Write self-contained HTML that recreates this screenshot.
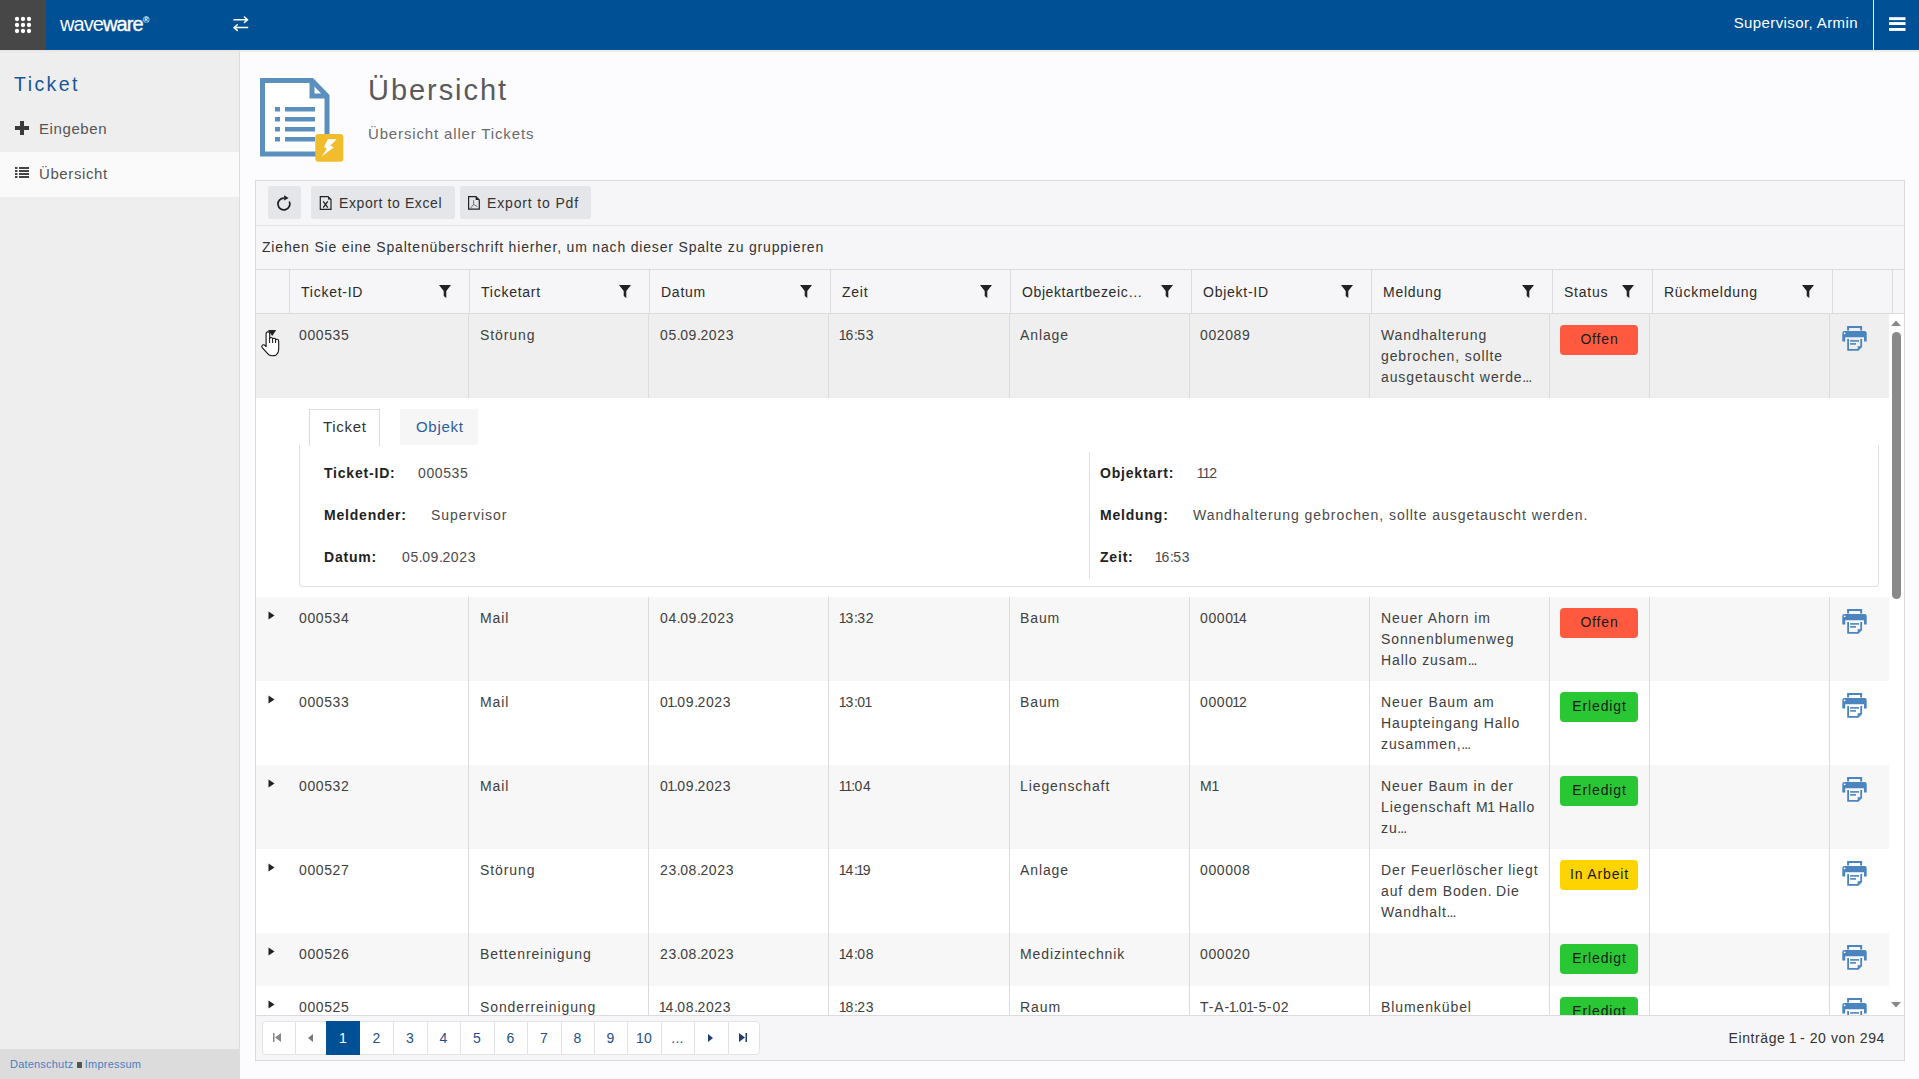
<!DOCTYPE html><html><head><meta charset="utf-8"><style>
*{box-sizing:border-box;margin:0;padding:0}
html,body{width:1919px;height:1079px;overflow:hidden;background:#fcfcfe;font-family:"Liberation Sans", sans-serif;color:#333}
.a{position:absolute}
.t{position:absolute;white-space:nowrap;font-size:14px;letter-spacing:0.8px;line-height:16px}
#top{left:0;top:0;width:1919px;height:50px;background:#005096}
#apps{left:0;top:0;width:46px;height:50px;background:#474747}
#side{left:0;top:50px;width:240px;height:1029px;background:#eeeeee;border-right:1px solid #dddddd}
.grid{left:255px;top:180px;width:1650px;height:881px;border:1px solid #dadadd;background:#f6f6f8}
.btn{position:absolute;top:186px;height:33px;background:#e4e6ea;border-radius:3px}
.hc{position:absolute;top:270px;height:43px;border-left:1px solid #dcdcdc}
.row{position:absolute;left:256px;width:1633px}
.bc{position:absolute;top:0;bottom:0;border-left:1px solid #dcdcdc}
.badge{position:absolute;width:78px;height:30px;border-radius:4px;font-size:14px;letter-spacing:0.85px;line-height:28px;text-align:center;color:#1a1a1a;text-indent:1px}
.pg{position:absolute;top:1021px;height:34px;width:34px;text-align:center;line-height:34px;font-size:14px;color:#1f4f8f;border-left:1px solid #e3e3e3}
</style></head><body>
<div id="top" class="a"></div>
<div id="apps" class="a"></div>
<svg class="a" style="left:0;top:0" width="46" height="50"><circle cx="17" cy="19" r="2.15" fill="#fff"/><circle cx="17" cy="25" r="2.15" fill="#fff"/><circle cx="17" cy="31" r="2.15" fill="#fff"/><circle cx="23" cy="19" r="2.15" fill="#fff"/><circle cx="23" cy="25" r="2.15" fill="#fff"/><circle cx="23" cy="31" r="2.15" fill="#fff"/><circle cx="29" cy="19" r="2.15" fill="#fff"/><circle cx="29" cy="25" r="2.15" fill="#fff"/><circle cx="29" cy="31" r="2.15" fill="#fff"/></svg>
<div class="t" style="left:60px;top:12px;font-size:20px;line-height:24px;color:#fff;letter-spacing:-0.95px">wave<span style="-webkit-text-stroke:0.35px #fff;letter-spacing:-0.9px">ware</span><span style="font-size:9px;position:relative;top:-8px;left:0px;font-weight:bold">®</span></div>
<svg class="a" style="left:232px;top:16px" width="18" height="17" viewBox="0 0 18 17"><g stroke="#fff" stroke-width="1.5" fill="none" stroke-linecap="round" stroke-linejoin="round"><path d="M2 3.7H15.6M12.4 1L15.6 3.7L12.4 6.5"/><path d="M15.6 11.6H2M5.3 8.8L2 11.6L5.3 14.4"/></g></svg>
<div class="t" style="right:61px;top:14px;font-size:15px;line-height:18px;color:#fff;letter-spacing:0.4px">Supervisor, Armin</div>
<div class="a" style="left:1873px;top:0;width:1px;height:50px;background:#e8eef6"></div>
<svg class="a" style="left:1889px;top:16px" width="17" height="16"><rect x="0" y="1.2" width="16.5" height="2.9" fill="#fff"/><rect x="0" y="6.1" width="16.5" height="2.9" fill="#fff"/><rect x="0" y="12" width="16.5" height="2.9" fill="#fff"/></svg>
<div id="side" class="a"></div>
<div class="a" style="left:0;top:50px;width:1919px;height:3px;background:linear-gradient(#e4e4e4,rgba(0,0,0,0))"></div>
<div class="t" style="left:14px;top:73px;font-size:19.5px;line-height:22px;color:#17579b;letter-spacing:2.45px">Ticket</div>
<svg class="a" style="left:15px;top:121px" width="14" height="14"><path d="M5 0H9V5H14V9H9V14H5V9H0V5H5Z" fill="#3a3a3a"/></svg>
<div class="t" style="left:39px;top:120px;font-size:15px;line-height:18px;color:#555;letter-spacing:0.6px">Eingeben</div>
<div class="a" style="left:0;top:152px;width:239px;height:45px;background:#fafafa"></div>
<svg class="a" style="left:15px;top:166px" width="14" height="13"><rect x="0" y="1" width="2.5" height="2" fill="#444"/><rect x="4" y="1" width="10" height="2" fill="#444"/><rect x="0" y="4" width="2.5" height="2" fill="#444"/><rect x="4" y="4" width="10" height="2" fill="#444"/><rect x="0" y="7" width="2.5" height="2" fill="#444"/><rect x="4" y="7" width="10" height="2" fill="#444"/><rect x="0" y="10" width="2.5" height="2" fill="#444"/><rect x="4" y="10" width="10" height="2" fill="#444"/></svg>
<div class="t" style="left:39px;top:165px;font-size:15px;line-height:18px;color:#555;letter-spacing:0.6px">Übersicht</div>
<div class="a" style="left:0;top:1049px;width:239px;height:30px;background:#dcdcdc"></div>
<div class="t" style="left:10px;top:1058px;font-size:11px;line-height:13px;color:#4a7fbf;letter-spacing:0.2px">Datenschutz <span style="display:inline-block;width:5px;height:6px;background:#555;vertical-align:0px"></span> Impressum</div>
<svg class="a" style="left:258px;top:76px" width="90" height="90" viewBox="0 0 90 90">
<path d="M4.5 4.5H54L69 20V78H4.5Z" fill="#fff" stroke="#5b8fbe" stroke-width="5"/>
<path d="M54 4.5V20H69" fill="none" stroke="#5b8fbe" stroke-width="5"/>
<g fill="#5b8fbe"><rect x="17" y="31" width="5" height="4.5"/><rect x="27" y="31" width="30" height="4.5"/>
<rect x="17" y="41" width="5" height="4.5"/><rect x="27" y="41" width="30" height="4.5"/>
<rect x="17" y="51" width="5" height="4.5"/><rect x="27" y="51" width="30" height="4.5"/>
<rect x="17" y="61" width="5" height="4.5"/><rect x="27" y="61" width="30" height="4.5"/></g>
<rect x="57.3" y="58" width="28" height="27.7" rx="3" fill="#f1bd2c"/>
<path d="M70 63L78.7 63.2L72.2 69.8L76 71.3L63.7 80.4L68.8 72.7L66 70.7Z" fill="#fff"/>
</svg>
<div class="t" style="left:368px;top:74px;font-size:29px;line-height:33px;color:#5a5a5a;letter-spacing:1.95px">Übersicht</div>
<div class="t" style="left:368px;top:125px;font-size:15px;line-height:18px;color:#6a6a6a;letter-spacing:0.85px">Übersicht aller Tickets</div>
<div class="a grid"></div>
<div class="a" style="left:256px;top:225px;width:1648px;height:1px;background:#e3e3e6"></div>
<div class="a" style="left:256px;top:269px;width:1648px;height:1px;background:#dcdcdf"></div>
<div class="btn" style="left:268px;width:33px"></div>
<svg class="a" style="left:276px;top:194px" width="17" height="17" viewBox="0 0 17 17"><path d="M7.9 4.1A5.9 5.9 0 1 0 13.25 7.5" fill="none" stroke="#1e1e1e" stroke-width="1.7"/><path d="M8.1 1.2L12.6 3.9L8.1 6.6Z" fill="#1e1e1e"/></svg>
<div class="btn" style="left:311px;width:144px"></div>
<svg class="a" style="left:319px;top:195px" width="14" height="16" viewBox="0 0 14 16"><path d="M1.3 1.6H9L12 4.6V14.4H1.3Z" fill="none" stroke="#222" stroke-width="1.2"/><path d="M9 1.6V4.6H12Z" fill="#222"/><path d="M4.2 6.3L8.8 12.6M8.8 6.3L4.2 12.6" stroke="#222" stroke-width="1.3"/></svg>
<div class="t" style="left:339px;top:195px;font-size:14px;letter-spacing:0.6px;color:#333">Export to Excel</div>
<div class="btn" style="left:460px;width:131px"></div>
<svg class="a" style="left:467px;top:195px" width="14" height="16" viewBox="0 0 14 16"><path d="M1.6 1.7H9L12.3 5V14.2H1.6Z" fill="none" stroke="#222" stroke-width="1.2"/><path d="M8.6 1.7V5H12.3Z" fill="#222"/><path d="M6.6 5.2V9.5L3.4 13.3M6.6 9.5L10.4 11.6" fill="none" stroke="#555" stroke-width="0.8"/></svg>
<div class="t" style="left:487px;top:195px;font-size:14px;letter-spacing:0.85px;color:#333">Export to Pdf</div>
<div class="t" style="left:262px;top:239px;font-size:14px;letter-spacing:0.82px;color:#333">Ziehen Sie eine Spaltenüberschrift hierher, um nach dieser Spalte zu gruppieren</div>
<div class="a" style="left:256px;top:313px;width:1648px;height:1px;background:#dcdcdf"></div>
<div class="a" style="left:289px;top:270px;width:1px;height:43px;background:#dcdcdf"></div>
<div class="t" style="left:301px;top:284px;color:#2b2b2b;letter-spacing:0.75px">Ticket-ID</div>
<div class="a" style="left:439px;top:284px;width:12px;height:13px"><svg width="12" height="13" viewBox="0 0 12 13"><path d="M0 0H12L7.3 6V13L4.7 11V6Z" fill="#222"/></svg></div>
<div class="a" style="left:469px;top:270px;width:1px;height:43px;background:#dcdcdf"></div>
<div class="t" style="left:481px;top:284px;color:#2b2b2b;letter-spacing:0.75px">Ticketart</div>
<div class="a" style="left:619px;top:284px;width:12px;height:13px"><svg width="12" height="13" viewBox="0 0 12 13"><path d="M0 0H12L7.3 6V13L4.7 11V6Z" fill="#222"/></svg></div>
<div class="a" style="left:649px;top:270px;width:1px;height:43px;background:#dcdcdf"></div>
<div class="t" style="left:661px;top:284px;color:#2b2b2b;letter-spacing:0.75px">Datum</div>
<div class="a" style="left:800px;top:284px;width:12px;height:13px"><svg width="12" height="13" viewBox="0 0 12 13"><path d="M0 0H12L7.3 6V13L4.7 11V6Z" fill="#222"/></svg></div>
<div class="a" style="left:830px;top:270px;width:1px;height:43px;background:#dcdcdf"></div>
<div class="t" style="left:842px;top:284px;color:#2b2b2b;letter-spacing:0.75px">Zeit</div>
<div class="a" style="left:980px;top:284px;width:12px;height:13px"><svg width="12" height="13" viewBox="0 0 12 13"><path d="M0 0H12L7.3 6V13L4.7 11V6Z" fill="#222"/></svg></div>
<div class="a" style="left:1010px;top:270px;width:1px;height:43px;background:#dcdcdf"></div>
<div class="t" style="left:1022px;top:284px;color:#2b2b2b;letter-spacing:0.6px">Objektartbezeic…</div>
<div class="a" style="left:1161px;top:284px;width:12px;height:13px"><svg width="12" height="13" viewBox="0 0 12 13"><path d="M0 0H12L7.3 6V13L4.7 11V6Z" fill="#222"/></svg></div>
<div class="a" style="left:1191px;top:270px;width:1px;height:43px;background:#dcdcdf"></div>
<div class="t" style="left:1203px;top:284px;color:#2b2b2b;letter-spacing:0.75px">Objekt-ID</div>
<div class="a" style="left:1341px;top:284px;width:12px;height:13px"><svg width="12" height="13" viewBox="0 0 12 13"><path d="M0 0H12L7.3 6V13L4.7 11V6Z" fill="#222"/></svg></div>
<div class="a" style="left:1371px;top:270px;width:1px;height:43px;background:#dcdcdf"></div>
<div class="t" style="left:1383px;top:284px;color:#2b2b2b;letter-spacing:0.75px">Meldung</div>
<div class="a" style="left:1522px;top:284px;width:12px;height:13px"><svg width="12" height="13" viewBox="0 0 12 13"><path d="M0 0H12L7.3 6V13L4.7 11V6Z" fill="#222"/></svg></div>
<div class="a" style="left:1552px;top:270px;width:1px;height:43px;background:#dcdcdf"></div>
<div class="t" style="left:1564px;top:284px;color:#2b2b2b;letter-spacing:0.75px">Status</div>
<div class="a" style="left:1622px;top:284px;width:12px;height:13px"><svg width="12" height="13" viewBox="0 0 12 13"><path d="M0 0H12L7.3 6V13L4.7 11V6Z" fill="#222"/></svg></div>
<div class="a" style="left:1652px;top:270px;width:1px;height:43px;background:#dcdcdf"></div>
<div class="t" style="left:1664px;top:284px;color:#2b2b2b;letter-spacing:0.75px">Rückmeldung</div>
<div class="a" style="left:1802px;top:284px;width:12px;height:13px"><svg width="12" height="13" viewBox="0 0 12 13"><path d="M0 0H12L7.3 6V13L4.7 11V6Z" fill="#222"/></svg></div>
<div class="a" style="left:1832px;top:270px;width:1px;height:43px;background:#dcdcdf"></div>
<div class="a" style="left:1892px;top:270px;width:1px;height:43px;background:#dcdcdf"></div>
<div class="a" style="left:256px;top:314px;width:1648px;height:701px;background:#fff;overflow:hidden">
<div class="a" style="left:0;top:0px;width:1633px;height:84px;background:#efefef"><div class="a" style="left:212px;top:0;width:1px;height:84px;background:#dcdcdc"></div><div class="a" style="left:392px;top:0;width:1px;height:84px;background:#dcdcdc"></div><div class="a" style="left:572px;top:0;width:1px;height:84px;background:#dcdcdc"></div><div class="a" style="left:753px;top:0;width:1px;height:84px;background:#dcdcdc"></div><div class="a" style="left:933px;top:0;width:1px;height:84px;background:#dcdcdc"></div><div class="a" style="left:1113px;top:0;width:1px;height:84px;background:#dcdcdc"></div><div class="a" style="left:1293px;top:0;width:1px;height:84px;background:#dcdcdc"></div><div class="a" style="left:1393px;top:0;width:1px;height:84px;background:#dcdcdc"></div><div class="a" style="left:1573px;top:0;width:1px;height:84px;background:#dcdcdc"></div><div class="t" style="left:43px;top:13px;color:#404040;letter-spacing:0.9px"><span style="letter-spacing:0.6px">000535</span></div><div class="t" style="left:224px;top:13px;color:#404040;letter-spacing:0.9px">Störung</div><div class="t" style="left:404px;top:13px;color:#404040;letter-spacing:0.9px"><span style="letter-spacing:0.6px">05</span><span style="letter-spacing:-0.45px">.</span><span style="letter-spacing:0.6px">09</span><span style="letter-spacing:-0.45px">.</span><span style="letter-spacing:0.6px">2023</span></div><div class="t" style="left:584px;top:13px;color:#404040;letter-spacing:0.9px"><span style="margin-left:-1.2px;letter-spacing:-1.1px">1</span><span style="letter-spacing:0.6px">6</span><span style="letter-spacing:-0.45px">:</span><span style="letter-spacing:0.6px">53</span></div><div class="t" style="left:764px;top:13px;color:#404040;letter-spacing:0.9px">Anlage</div><div class="t" style="left:944px;top:13px;color:#404040;letter-spacing:0.9px"><span style="letter-spacing:0.6px">002089</span></div><div class="t" style="left:1125px;top:13px;color:#404040;letter-spacing:0.9px">Wandhalterung</div><div class="t" style="left:1125px;top:34px;color:#404040;letter-spacing:0.9px">gebrochen, sollte</div><div class="t" style="left:1125px;top:55px;color:#404040;letter-spacing:0.9px">ausgetauscht werde<span style="letter-spacing:-0.9px;margin-left:-0.3px">...</span></div><div class="badge" style="left:1304px;top:11px;background:#ff5a40">Offen</div><svg class="a" style="left:1586px;top:12px" width="26" height="26" viewBox="0 0 26 26"><path d="M6.1 4.6V1.1H19.1V4.6" fill="none" stroke="#4b85c0" stroke-width="2"/><path d="M0.3 7Q0.3 4.9 2.4 4.9H22.6Q24.7 4.9 24.7 7V15.6H22V11.2H3.2V15.6H0.3Z" fill="#4b85c0"/><circle cx="2.6" cy="7.3" r="0.9" fill="#fff"/><path d="M6.1 13V23.85H16L19.2 20.6V13" fill="none" stroke="#4b85c0" stroke-width="1.8"/><path d="M15.6 24.7L20.1 20.2H15.6Z" fill="#4b85c0"/><rect x="8.1" y="14.1" width="8.9" height="1.6" fill="#4b85c0"/><rect x="8.1" y="17.1" width="5.9" height="1.6" fill="#4b85c0"/></svg></div>
<div class="a" style="left:0;top:84px;width:1633px;height:199px;background:#fff">
<div class="a" style="left:53px;top:11px;width:71px;height:37px;border:1px solid #dcdcdc;border-bottom:none;background:#fff"></div>
<div class="t" style="left:67px;top:21px;font-size:15px;letter-spacing:0.7px;color:#333">Ticket</div>
<div class="a" style="left:144px;top:11px;width:78px;height:36px;background:#f6f6f6"></div>
<div class="t" style="left:160px;top:21px;font-size:15px;letter-spacing:0.7px;color:#2d5c9c">Objekt</div>
<div class="a" style="left:43px;top:47px;width:1580px;height:142px;border:1px solid #e2e2e2;border-radius:0 0 4px 4px;border-top:none"></div>
<div class="a" style="left:833px;top:54px;width:1px;height:127px;background:#e0e0e0"></div>
<div class="t" style="left:68px;top:67px;font-weight:bold;letter-spacing:0.8px;color:#222">Ticket-ID:</div><div class="t" style="left:162px;top:67px;color:#4a4a4a;letter-spacing:0.95px"><span style="letter-spacing:0.6px">000535</span></div>
<div class="t" style="left:68px;top:109px;font-weight:bold;letter-spacing:0.8px;color:#222">Meldender:</div><div class="t" style="left:175px;top:109px;color:#4a4a4a;letter-spacing:0.95px">Supervisor</div>
<div class="t" style="left:68px;top:151px;font-weight:bold;letter-spacing:0.8px;color:#222">Datum:</div><div class="t" style="left:146px;top:151px;color:#4a4a4a;letter-spacing:0.95px"><span style="letter-spacing:0.6px">05</span><span style="letter-spacing:-0.45px">.</span><span style="letter-spacing:0.6px">09</span><span style="letter-spacing:-0.45px">.</span><span style="letter-spacing:0.6px">2023</span></div>
<div class="t" style="left:844px;top:67px;font-weight:bold;letter-spacing:0.8px;color:#222">Objektart:</div><div class="t" style="left:942px;top:67px;color:#4a4a4a;letter-spacing:0.95px"><span style="margin-left:-1.2px;letter-spacing:-1.1px">11</span><span style="letter-spacing:0.6px">2</span></div>
<div class="t" style="left:844px;top:109px;font-weight:bold;letter-spacing:0.8px;color:#222">Meldung:</div><div class="t" style="left:937px;top:109px;color:#4a4a4a;letter-spacing:0.95px">Wandhalterung gebrochen, sollte ausgetauscht werden<span style="letter-spacing:-0.45px">.</span></div>
<div class="t" style="left:844px;top:151px;font-weight:bold;letter-spacing:0.8px;color:#222">Zeit:</div><div class="t" style="left:900px;top:151px;color:#4a4a4a;letter-spacing:0.95px"><span style="margin-left:-1.2px;letter-spacing:-1.1px">1</span><span style="letter-spacing:0.6px">6</span><span style="letter-spacing:-0.45px">:</span><span style="letter-spacing:0.6px">53</span></div>
</div>
<div class="a" style="left:0;top:283px;width:1633px;height:84px;background:#f7f7f7"><div class="a" style="left:212px;top:0;width:1px;height:84px;background:#dcdcdc"></div><div class="a" style="left:392px;top:0;width:1px;height:84px;background:#dcdcdc"></div><div class="a" style="left:572px;top:0;width:1px;height:84px;background:#dcdcdc"></div><div class="a" style="left:753px;top:0;width:1px;height:84px;background:#dcdcdc"></div><div class="a" style="left:933px;top:0;width:1px;height:84px;background:#dcdcdc"></div><div class="a" style="left:1113px;top:0;width:1px;height:84px;background:#dcdcdc"></div><div class="a" style="left:1293px;top:0;width:1px;height:84px;background:#dcdcdc"></div><div class="a" style="left:1393px;top:0;width:1px;height:84px;background:#dcdcdc"></div><div class="a" style="left:1573px;top:0;width:1px;height:84px;background:#dcdcdc"></div><svg class="a" style="left:12px;top:14px" width="7" height="9"><path d="M0.5 0.5L6.5 4.5L0.5 8.5Z" fill="#222"/></svg><div class="t" style="left:43px;top:13px;color:#404040;letter-spacing:0.9px"><span style="letter-spacing:0.6px">000534</span></div><div class="t" style="left:224px;top:13px;color:#404040;letter-spacing:0.9px">Mail</div><div class="t" style="left:404px;top:13px;color:#404040;letter-spacing:0.9px"><span style="letter-spacing:0.6px">04</span><span style="letter-spacing:-0.45px">.</span><span style="letter-spacing:0.6px">09</span><span style="letter-spacing:-0.45px">.</span><span style="letter-spacing:0.6px">2023</span></div><div class="t" style="left:584px;top:13px;color:#404040;letter-spacing:0.9px"><span style="margin-left:-1.2px;letter-spacing:-1.1px">1</span><span style="letter-spacing:0.6px">3</span><span style="letter-spacing:-0.45px">:</span><span style="letter-spacing:0.6px">32</span></div><div class="t" style="left:764px;top:13px;color:#404040;letter-spacing:0.9px">Baum</div><div class="t" style="left:944px;top:13px;color:#404040;letter-spacing:0.9px"><span style="letter-spacing:0.6px">0000</span><span style="margin-left:-1.2px;letter-spacing:-1.1px">1</span><span style="letter-spacing:0.6px">4</span></div><div class="t" style="left:1125px;top:13px;color:#404040;letter-spacing:0.9px">Neuer Ahorn im</div><div class="t" style="left:1125px;top:34px;color:#404040;letter-spacing:0.9px">Sonnenblumenweg</div><div class="t" style="left:1125px;top:55px;color:#404040;letter-spacing:0.9px">Hallo zusam<span style="letter-spacing:-0.9px;margin-left:-0.3px">...</span></div><div class="badge" style="left:1304px;top:11px;background:#ff5a40">Offen</div><svg class="a" style="left:1586px;top:12px" width="26" height="26" viewBox="0 0 26 26"><path d="M6.1 4.6V1.1H19.1V4.6" fill="none" stroke="#4b85c0" stroke-width="2"/><path d="M0.3 7Q0.3 4.9 2.4 4.9H22.6Q24.7 4.9 24.7 7V15.6H22V11.2H3.2V15.6H0.3Z" fill="#4b85c0"/><circle cx="2.6" cy="7.3" r="0.9" fill="#fff"/><path d="M6.1 13V23.85H16L19.2 20.6V13" fill="none" stroke="#4b85c0" stroke-width="1.8"/><path d="M15.6 24.7L20.1 20.2H15.6Z" fill="#4b85c0"/><rect x="8.1" y="14.1" width="8.9" height="1.6" fill="#4b85c0"/><rect x="8.1" y="17.1" width="5.9" height="1.6" fill="#4b85c0"/></svg></div>
<div class="a" style="left:0;top:367px;width:1633px;height:84px;background:#ffffff"><div class="a" style="left:212px;top:0;width:1px;height:84px;background:#dcdcdc"></div><div class="a" style="left:392px;top:0;width:1px;height:84px;background:#dcdcdc"></div><div class="a" style="left:572px;top:0;width:1px;height:84px;background:#dcdcdc"></div><div class="a" style="left:753px;top:0;width:1px;height:84px;background:#dcdcdc"></div><div class="a" style="left:933px;top:0;width:1px;height:84px;background:#dcdcdc"></div><div class="a" style="left:1113px;top:0;width:1px;height:84px;background:#dcdcdc"></div><div class="a" style="left:1293px;top:0;width:1px;height:84px;background:#dcdcdc"></div><div class="a" style="left:1393px;top:0;width:1px;height:84px;background:#dcdcdc"></div><div class="a" style="left:1573px;top:0;width:1px;height:84px;background:#dcdcdc"></div><svg class="a" style="left:12px;top:14px" width="7" height="9"><path d="M0.5 0.5L6.5 4.5L0.5 8.5Z" fill="#222"/></svg><div class="t" style="left:43px;top:13px;color:#404040;letter-spacing:0.9px"><span style="letter-spacing:0.6px">000533</span></div><div class="t" style="left:224px;top:13px;color:#404040;letter-spacing:0.9px">Mail</div><div class="t" style="left:404px;top:13px;color:#404040;letter-spacing:0.9px"><span style="letter-spacing:0.6px">0</span><span style="margin-left:-1.2px;letter-spacing:-1.1px">1</span><span style="letter-spacing:-0.45px">.</span><span style="letter-spacing:0.6px">09</span><span style="letter-spacing:-0.45px">.</span><span style="letter-spacing:0.6px">2023</span></div><div class="t" style="left:584px;top:13px;color:#404040;letter-spacing:0.9px"><span style="margin-left:-1.2px;letter-spacing:-1.1px">1</span><span style="letter-spacing:0.6px">3</span><span style="letter-spacing:-0.45px">:</span><span style="letter-spacing:0.6px">0</span><span style="margin-left:-1.2px;letter-spacing:-1.1px">1</span></div><div class="t" style="left:764px;top:13px;color:#404040;letter-spacing:0.9px">Baum</div><div class="t" style="left:944px;top:13px;color:#404040;letter-spacing:0.9px"><span style="letter-spacing:0.6px">0000</span><span style="margin-left:-1.2px;letter-spacing:-1.1px">1</span><span style="letter-spacing:0.6px">2</span></div><div class="t" style="left:1125px;top:13px;color:#404040;letter-spacing:0.9px">Neuer Baum am</div><div class="t" style="left:1125px;top:34px;color:#404040;letter-spacing:0.9px">Haupteingang Hallo</div><div class="t" style="left:1125px;top:55px;color:#404040;letter-spacing:0.9px">zusammen,<span style="letter-spacing:-0.9px;margin-left:-0.3px">...</span></div><div class="badge" style="left:1304px;top:11px;background:#2ac734">Erledigt</div><svg class="a" style="left:1586px;top:12px" width="26" height="26" viewBox="0 0 26 26"><path d="M6.1 4.6V1.1H19.1V4.6" fill="none" stroke="#4b85c0" stroke-width="2"/><path d="M0.3 7Q0.3 4.9 2.4 4.9H22.6Q24.7 4.9 24.7 7V15.6H22V11.2H3.2V15.6H0.3Z" fill="#4b85c0"/><circle cx="2.6" cy="7.3" r="0.9" fill="#fff"/><path d="M6.1 13V23.85H16L19.2 20.6V13" fill="none" stroke="#4b85c0" stroke-width="1.8"/><path d="M15.6 24.7L20.1 20.2H15.6Z" fill="#4b85c0"/><rect x="8.1" y="14.1" width="8.9" height="1.6" fill="#4b85c0"/><rect x="8.1" y="17.1" width="5.9" height="1.6" fill="#4b85c0"/></svg></div>
<div class="a" style="left:0;top:451px;width:1633px;height:84px;background:#f7f7f7"><div class="a" style="left:212px;top:0;width:1px;height:84px;background:#dcdcdc"></div><div class="a" style="left:392px;top:0;width:1px;height:84px;background:#dcdcdc"></div><div class="a" style="left:572px;top:0;width:1px;height:84px;background:#dcdcdc"></div><div class="a" style="left:753px;top:0;width:1px;height:84px;background:#dcdcdc"></div><div class="a" style="left:933px;top:0;width:1px;height:84px;background:#dcdcdc"></div><div class="a" style="left:1113px;top:0;width:1px;height:84px;background:#dcdcdc"></div><div class="a" style="left:1293px;top:0;width:1px;height:84px;background:#dcdcdc"></div><div class="a" style="left:1393px;top:0;width:1px;height:84px;background:#dcdcdc"></div><div class="a" style="left:1573px;top:0;width:1px;height:84px;background:#dcdcdc"></div><svg class="a" style="left:12px;top:14px" width="7" height="9"><path d="M0.5 0.5L6.5 4.5L0.5 8.5Z" fill="#222"/></svg><div class="t" style="left:43px;top:13px;color:#404040;letter-spacing:0.9px"><span style="letter-spacing:0.6px">000532</span></div><div class="t" style="left:224px;top:13px;color:#404040;letter-spacing:0.9px">Mail</div><div class="t" style="left:404px;top:13px;color:#404040;letter-spacing:0.9px"><span style="letter-spacing:0.6px">0</span><span style="margin-left:-1.2px;letter-spacing:-1.1px">1</span><span style="letter-spacing:-0.45px">.</span><span style="letter-spacing:0.6px">09</span><span style="letter-spacing:-0.45px">.</span><span style="letter-spacing:0.6px">2023</span></div><div class="t" style="left:584px;top:13px;color:#404040;letter-spacing:0.9px"><span style="margin-left:-1.2px;letter-spacing:-1.1px">11</span><span style="letter-spacing:-0.45px">:</span><span style="letter-spacing:0.6px">04</span></div><div class="t" style="left:764px;top:13px;color:#404040;letter-spacing:0.9px">Liegenschaft</div><div class="t" style="left:944px;top:13px;color:#404040;letter-spacing:0.9px">M<span style="margin-left:-1.2px;letter-spacing:-1.1px">1</span></div><div class="t" style="left:1125px;top:13px;color:#404040;letter-spacing:0.9px">Neuer Baum in der</div><div class="t" style="left:1125px;top:34px;color:#404040;letter-spacing:0.9px">Liegenschaft M<span style="margin-left:-1.2px;letter-spacing:-1.1px">1</span> Hallo</div><div class="t" style="left:1125px;top:55px;color:#404040;letter-spacing:0.9px">zu<span style="letter-spacing:-0.9px;margin-left:-0.3px">...</span></div><div class="badge" style="left:1304px;top:11px;background:#2ac734">Erledigt</div><svg class="a" style="left:1586px;top:12px" width="26" height="26" viewBox="0 0 26 26"><path d="M6.1 4.6V1.1H19.1V4.6" fill="none" stroke="#4b85c0" stroke-width="2"/><path d="M0.3 7Q0.3 4.9 2.4 4.9H22.6Q24.7 4.9 24.7 7V15.6H22V11.2H3.2V15.6H0.3Z" fill="#4b85c0"/><circle cx="2.6" cy="7.3" r="0.9" fill="#fff"/><path d="M6.1 13V23.85H16L19.2 20.6V13" fill="none" stroke="#4b85c0" stroke-width="1.8"/><path d="M15.6 24.7L20.1 20.2H15.6Z" fill="#4b85c0"/><rect x="8.1" y="14.1" width="8.9" height="1.6" fill="#4b85c0"/><rect x="8.1" y="17.1" width="5.9" height="1.6" fill="#4b85c0"/></svg></div>
<div class="a" style="left:0;top:535px;width:1633px;height:84px;background:#ffffff"><div class="a" style="left:212px;top:0;width:1px;height:84px;background:#dcdcdc"></div><div class="a" style="left:392px;top:0;width:1px;height:84px;background:#dcdcdc"></div><div class="a" style="left:572px;top:0;width:1px;height:84px;background:#dcdcdc"></div><div class="a" style="left:753px;top:0;width:1px;height:84px;background:#dcdcdc"></div><div class="a" style="left:933px;top:0;width:1px;height:84px;background:#dcdcdc"></div><div class="a" style="left:1113px;top:0;width:1px;height:84px;background:#dcdcdc"></div><div class="a" style="left:1293px;top:0;width:1px;height:84px;background:#dcdcdc"></div><div class="a" style="left:1393px;top:0;width:1px;height:84px;background:#dcdcdc"></div><div class="a" style="left:1573px;top:0;width:1px;height:84px;background:#dcdcdc"></div><svg class="a" style="left:12px;top:14px" width="7" height="9"><path d="M0.5 0.5L6.5 4.5L0.5 8.5Z" fill="#222"/></svg><div class="t" style="left:43px;top:13px;color:#404040;letter-spacing:0.9px"><span style="letter-spacing:0.6px">000527</span></div><div class="t" style="left:224px;top:13px;color:#404040;letter-spacing:0.9px">Störung</div><div class="t" style="left:404px;top:13px;color:#404040;letter-spacing:0.9px"><span style="letter-spacing:0.6px">23</span><span style="letter-spacing:-0.45px">.</span><span style="letter-spacing:0.6px">08</span><span style="letter-spacing:-0.45px">.</span><span style="letter-spacing:0.6px">2023</span></div><div class="t" style="left:584px;top:13px;color:#404040;letter-spacing:0.9px"><span style="margin-left:-1.2px;letter-spacing:-1.1px">1</span><span style="letter-spacing:0.6px">4</span><span style="letter-spacing:-0.45px">:</span><span style="margin-left:-1.2px;letter-spacing:-1.1px">1</span><span style="letter-spacing:0.6px">9</span></div><div class="t" style="left:764px;top:13px;color:#404040;letter-spacing:0.9px">Anlage</div><div class="t" style="left:944px;top:13px;color:#404040;letter-spacing:0.9px"><span style="letter-spacing:0.6px">000008</span></div><div class="t" style="left:1125px;top:13px;color:#404040;letter-spacing:0.9px">Der Feuerlöscher liegt</div><div class="t" style="left:1125px;top:34px;color:#404040;letter-spacing:0.9px">auf dem Boden<span style="letter-spacing:-0.45px">.</span> Die</div><div class="t" style="left:1125px;top:55px;color:#404040;letter-spacing:0.9px">Wandhalt<span style="letter-spacing:-0.9px;margin-left:-0.3px">...</span></div><div class="badge" style="left:1304px;top:11px;background:#fdd400">In Arbeit</div><svg class="a" style="left:1586px;top:12px" width="26" height="26" viewBox="0 0 26 26"><path d="M6.1 4.6V1.1H19.1V4.6" fill="none" stroke="#4b85c0" stroke-width="2"/><path d="M0.3 7Q0.3 4.9 2.4 4.9H22.6Q24.7 4.9 24.7 7V15.6H22V11.2H3.2V15.6H0.3Z" fill="#4b85c0"/><circle cx="2.6" cy="7.3" r="0.9" fill="#fff"/><path d="M6.1 13V23.85H16L19.2 20.6V13" fill="none" stroke="#4b85c0" stroke-width="1.8"/><path d="M15.6 24.7L20.1 20.2H15.6Z" fill="#4b85c0"/><rect x="8.1" y="14.1" width="8.9" height="1.6" fill="#4b85c0"/><rect x="8.1" y="17.1" width="5.9" height="1.6" fill="#4b85c0"/></svg></div>
<div class="a" style="left:0;top:619px;width:1633px;height:53px;background:#f7f7f7"><div class="a" style="left:212px;top:0;width:1px;height:53px;background:#dcdcdc"></div><div class="a" style="left:392px;top:0;width:1px;height:53px;background:#dcdcdc"></div><div class="a" style="left:572px;top:0;width:1px;height:53px;background:#dcdcdc"></div><div class="a" style="left:753px;top:0;width:1px;height:53px;background:#dcdcdc"></div><div class="a" style="left:933px;top:0;width:1px;height:53px;background:#dcdcdc"></div><div class="a" style="left:1113px;top:0;width:1px;height:53px;background:#dcdcdc"></div><div class="a" style="left:1293px;top:0;width:1px;height:53px;background:#dcdcdc"></div><div class="a" style="left:1393px;top:0;width:1px;height:53px;background:#dcdcdc"></div><div class="a" style="left:1573px;top:0;width:1px;height:53px;background:#dcdcdc"></div><svg class="a" style="left:12px;top:14px" width="7" height="9"><path d="M0.5 0.5L6.5 4.5L0.5 8.5Z" fill="#222"/></svg><div class="t" style="left:43px;top:13px;color:#404040;letter-spacing:0.9px"><span style="letter-spacing:0.6px">000526</span></div><div class="t" style="left:224px;top:13px;color:#404040;letter-spacing:0.9px">Bettenreinigung</div><div class="t" style="left:404px;top:13px;color:#404040;letter-spacing:0.9px"><span style="letter-spacing:0.6px">23</span><span style="letter-spacing:-0.45px">.</span><span style="letter-spacing:0.6px">08</span><span style="letter-spacing:-0.45px">.</span><span style="letter-spacing:0.6px">2023</span></div><div class="t" style="left:584px;top:13px;color:#404040;letter-spacing:0.9px"><span style="margin-left:-1.2px;letter-spacing:-1.1px">1</span><span style="letter-spacing:0.6px">4</span><span style="letter-spacing:-0.45px">:</span><span style="letter-spacing:0.6px">08</span></div><div class="t" style="left:764px;top:13px;color:#404040;letter-spacing:0.9px">Medizintechnik</div><div class="t" style="left:944px;top:13px;color:#404040;letter-spacing:0.9px"><span style="letter-spacing:0.6px">000020</span></div><div class="t" style="left:1125px;top:13px;color:#404040;letter-spacing:0.9px"></div><div class="badge" style="left:1304px;top:11px;background:#2ac734">Erledigt</div><svg class="a" style="left:1586px;top:12px" width="26" height="26" viewBox="0 0 26 26"><path d="M6.1 4.6V1.1H19.1V4.6" fill="none" stroke="#4b85c0" stroke-width="2"/><path d="M0.3 7Q0.3 4.9 2.4 4.9H22.6Q24.7 4.9 24.7 7V15.6H22V11.2H3.2V15.6H0.3Z" fill="#4b85c0"/><circle cx="2.6" cy="7.3" r="0.9" fill="#fff"/><path d="M6.1 13V23.85H16L19.2 20.6V13" fill="none" stroke="#4b85c0" stroke-width="1.8"/><path d="M15.6 24.7L20.1 20.2H15.6Z" fill="#4b85c0"/><rect x="8.1" y="14.1" width="8.9" height="1.6" fill="#4b85c0"/><rect x="8.1" y="17.1" width="5.9" height="1.6" fill="#4b85c0"/></svg></div>
<div class="a" style="left:0;top:672px;width:1633px;height:84px;background:#ffffff"><div class="a" style="left:212px;top:0;width:1px;height:84px;background:#dcdcdc"></div><div class="a" style="left:392px;top:0;width:1px;height:84px;background:#dcdcdc"></div><div class="a" style="left:572px;top:0;width:1px;height:84px;background:#dcdcdc"></div><div class="a" style="left:753px;top:0;width:1px;height:84px;background:#dcdcdc"></div><div class="a" style="left:933px;top:0;width:1px;height:84px;background:#dcdcdc"></div><div class="a" style="left:1113px;top:0;width:1px;height:84px;background:#dcdcdc"></div><div class="a" style="left:1293px;top:0;width:1px;height:84px;background:#dcdcdc"></div><div class="a" style="left:1393px;top:0;width:1px;height:84px;background:#dcdcdc"></div><div class="a" style="left:1573px;top:0;width:1px;height:84px;background:#dcdcdc"></div><svg class="a" style="left:12px;top:14px" width="7" height="9"><path d="M0.5 0.5L6.5 4.5L0.5 8.5Z" fill="#222"/></svg><div class="t" style="left:43px;top:13px;color:#404040;letter-spacing:0.9px"><span style="letter-spacing:0.6px">000525</span></div><div class="t" style="left:224px;top:13px;color:#404040;letter-spacing:0.9px">Sonderreinigung</div><div class="t" style="left:404px;top:13px;color:#404040;letter-spacing:0.9px"><span style="margin-left:-1.2px;letter-spacing:-1.1px">1</span><span style="letter-spacing:0.6px">4</span><span style="letter-spacing:-0.45px">.</span><span style="letter-spacing:0.6px">08</span><span style="letter-spacing:-0.45px">.</span><span style="letter-spacing:0.6px">2023</span></div><div class="t" style="left:584px;top:13px;color:#404040;letter-spacing:0.9px"><span style="margin-left:-1.2px;letter-spacing:-1.1px">1</span><span style="letter-spacing:0.6px">8</span><span style="letter-spacing:-0.45px">:</span><span style="letter-spacing:0.6px">23</span></div><div class="t" style="left:764px;top:13px;color:#404040;letter-spacing:0.9px">Raum</div><div class="t" style="left:944px;top:13px;color:#404040;letter-spacing:0.9px">T-A-<span style="margin-left:-1.2px;letter-spacing:-1.1px">1</span><span style="letter-spacing:-0.45px">.</span><span style="letter-spacing:0.6px">0</span><span style="margin-left:-1.2px;letter-spacing:-1.1px">1</span>-<span style="letter-spacing:0.6px">5</span>-<span style="letter-spacing:0.6px">02</span></div><div class="t" style="left:1125px;top:13px;color:#404040;letter-spacing:0.9px">Blumenkübel</div><div class="badge" style="left:1304px;top:11px;background:#2ac734">Erledigt</div><svg class="a" style="left:1586px;top:12px" width="26" height="26" viewBox="0 0 26 26"><path d="M6.1 4.6V1.1H19.1V4.6" fill="none" stroke="#4b85c0" stroke-width="2"/><path d="M0.3 7Q0.3 4.9 2.4 4.9H22.6Q24.7 4.9 24.7 7V15.6H22V11.2H3.2V15.6H0.3Z" fill="#4b85c0"/><circle cx="2.6" cy="7.3" r="0.9" fill="#fff"/><path d="M6.1 13V23.85H16L19.2 20.6V13" fill="none" stroke="#4b85c0" stroke-width="1.8"/><path d="M15.6 24.7L20.1 20.2H15.6Z" fill="#4b85c0"/><rect x="8.1" y="14.1" width="8.9" height="1.6" fill="#4b85c0"/><rect x="8.1" y="17.1" width="5.9" height="1.6" fill="#4b85c0"/></svg></div>
<div class="a" style="left:1633px;top:0;width:15px;height:701px;background:#fff"></div>
<svg class="a" style="left:1635px;top:6px" width="10" height="6"><path d="M0 6L5 0.5L10 6Z" fill="#888"/></svg>
<div class="a" style="left:1636px;top:18px;width:9px;height:267px;background:#898989;border-radius:4.5px"></div>
<svg class="a" style="left:1635px;top:688px" width="10" height="6"><path d="M0 0H10L5 5.5Z" fill="#888"/></svg>
</div>
<div class="a" style="left:256px;top:1015px;width:1648px;height:1px;background:#dcdcdf"></div>
<div class="a" style="left:262px;top:1021px;width:498px;height:34px;border:1px solid #e3e3e3;border-radius:4px;background:#fff"></div>
<div class="a" style="left:295px;top:1022px;width:1px;height:32px;background:#e3e3e3"></div>
<div class="a" style="left:326px;top:1021px;width:34px;height:34px;background:#005096"></div>
<div class="t" style="left:326px;top:1030px;width:34px;text-align:center;color:#fff;letter-spacing:0">1</div>
<div class="t" style="left:360px;top:1030px;width:33px;text-align:center;color:#1f4f8f;letter-spacing:0.3px">2</div>
<div class="a" style="left:393px;top:1022px;width:1px;height:32px;background:#e3e3e3"></div>
<div class="t" style="left:393px;top:1030px;width:34px;text-align:center;color:#1f4f8f;letter-spacing:0.3px">3</div>
<div class="a" style="left:427px;top:1022px;width:1px;height:32px;background:#e3e3e3"></div>
<div class="t" style="left:427px;top:1030px;width:33px;text-align:center;color:#1f4f8f;letter-spacing:0.3px">4</div>
<div class="a" style="left:460px;top:1022px;width:1px;height:32px;background:#e3e3e3"></div>
<div class="t" style="left:460px;top:1030px;width:34px;text-align:center;color:#1f4f8f;letter-spacing:0.3px">5</div>
<div class="a" style="left:494px;top:1022px;width:1px;height:32px;background:#e3e3e3"></div>
<div class="t" style="left:494px;top:1030px;width:33px;text-align:center;color:#1f4f8f;letter-spacing:0.3px">6</div>
<div class="a" style="left:527px;top:1022px;width:1px;height:32px;background:#e3e3e3"></div>
<div class="t" style="left:527px;top:1030px;width:34px;text-align:center;color:#1f4f8f;letter-spacing:0.3px">7</div>
<div class="a" style="left:561px;top:1022px;width:1px;height:32px;background:#e3e3e3"></div>
<div class="t" style="left:561px;top:1030px;width:33px;text-align:center;color:#1f4f8f;letter-spacing:0.3px">8</div>
<div class="a" style="left:594px;top:1022px;width:1px;height:32px;background:#e3e3e3"></div>
<div class="t" style="left:594px;top:1030px;width:33px;text-align:center;color:#1f4f8f;letter-spacing:0.3px">9</div>
<div class="a" style="left:627px;top:1022px;width:1px;height:32px;background:#e3e3e3"></div>
<div class="t" style="left:627px;top:1030px;width:34px;text-align:center;color:#1f4f8f;letter-spacing:0.3px">10</div>
<div class="a" style="left:661px;top:1022px;width:1px;height:32px;background:#e3e3e3"></div>
<div class="t" style="left:661px;top:1030px;width:33px;text-align:center;color:#1f4f8f;letter-spacing:0.3px">...</div>
<div class="a" style="left:694px;top:1022px;width:1px;height:32px;background:#e3e3e3"></div>
<div class="a" style="left:728px;top:1022px;width:1px;height:32px;background:#e3e3e3"></div>
<svg class="a" style="left:273px;top:1033px" width="10" height="10"><rect x="0" y="0" width="1.5" height="9" fill="#888"/><path d="M8 0V9L2 4.5Z" fill="#888"/></svg>
<svg class="a" style="left:307px;top:1034px" width="8" height="9"><path d="M6 0V8L1 4Z" fill="#777"/></svg>
<svg class="a" style="left:707px;top:1034px" width="8" height="9"><path d="M1 0V8L6 4Z" fill="#1f3f70"/></svg>
<svg class="a" style="left:738px;top:1033px" width="10" height="10"><path d="M1 0V9L7 4.5Z" fill="#1f3f70"/><rect x="7.5" y="0" width="1.5" height="9" fill="#1f3f70"/></svg>
<div class="t" style="right:34px;top:1030px;color:#333;letter-spacing:0.6px">Einträge <span style="margin-left:-1.2px;letter-spacing:-1.1px">1</span> - 20 von 294</div>
<svg class="a" style="left:260px;top:330px" width="21" height="27" viewBox="0 0 21 27"><path d="M6.1 3.6Q6.1 1.9 7.9 1.9Q9.7 1.9 9.7 3.6V8.3Q10.2 7.5 11.1 7.5Q12.4 7.5 12.7 8.7Q13.3 8.2 14.3 8.3Q15.6 8.5 15.8 9.7Q16.4 9.2 17.3 9.3Q18.7 9.6 18.7 11.4V19.5Q18.6 23.2 16.2 24.9Q14.2 25.8 11.6 25.7Q9 25.5 7.2 23.2L2.2 17.6Q1.3 16.1 2.4 15.1Q3.7 14.2 5.1 15.5L6.1 16.5Z" fill="#fff" stroke="#111" stroke-width="1.1" stroke-linejoin="round"/><path d="M9.6 8.3V12.6M12.6 8.8V12.6M15.6 9.6V12.6" stroke="#111" stroke-width="1" stroke-linecap="round"/><path d="M8 0H16.2L12.2 6Z" fill="#222"/></svg>
</body></html>
